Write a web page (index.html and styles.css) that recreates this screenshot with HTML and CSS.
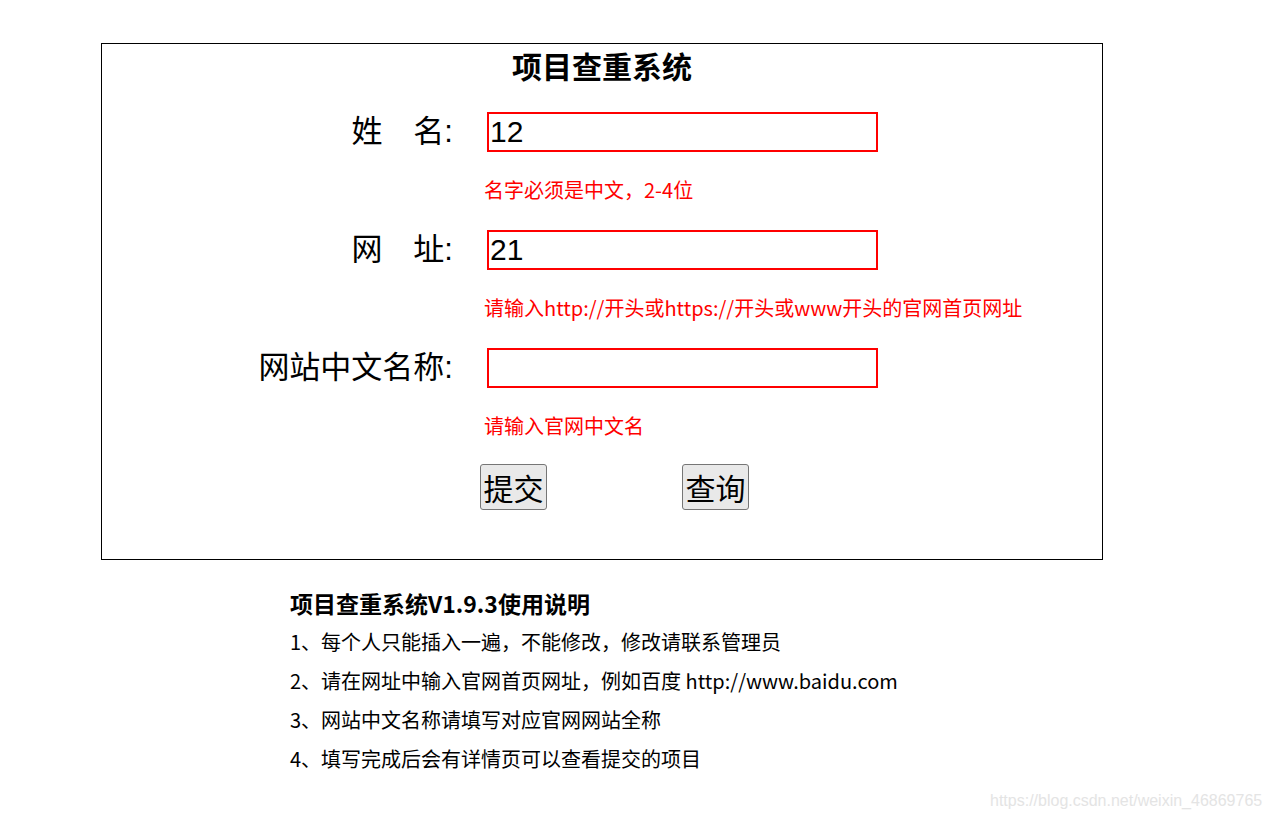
FILE: index.html
```html
<!DOCTYPE html>
<html lang="zh-CN">
<head>
    <meta charset="UTF-8">
    <meta name="viewport" content="width=device-width, initial-scale=1.0">
    <title>项目查重系统</title>
    <link rel="stylesheet" href="styles.css">
</head>
<body>
    <div id="main-box">
        <h1 class="title">项目查重系统</h1>
        <form class="check-form">
            <label class="field-label" for="name">姓　名:</label>
            <input class="field-input" id="name" type="text" value="12">
            <div class="field-hint">名字必须是中文，2-4位</div>

            <label class="field-label" for="url">网　址:</label>
            <input class="field-input" id="url" type="text" value="21">
            <div class="field-hint">请输入http://开头或https://开头或www开头的官网首页网址</div>

            <label class="field-label" for="cname">网站中文名称:</label>
            <input class="field-input" id="cname" type="text" value="">
            <div class="field-hint last">请输入官网中文名</div>

            <div class="buttons">
                <button type="button" class="btn">提交</button>
                <button type="button" class="btn">查询</button>
            </div>
        </form>
    </div>

    <div id="guide">
        <h2 class="guide-title">项目查重系统V1.9.3使用说明</h2>
        <p>1、每个人只能插入一遍，不能修改，修改请联系管理员</p>
        <p>2、请在网址中输入官网首页网址，例如百度 http://www.baidu.com</p>
        <p>3、网站中文名称请填写对应官网网站全称</p>
        <p>4、填写完成后会有详情页可以查看提交的项目</p>
    </div>

    <div class="watermark">https://blog.csdn.net/weixin_46869765</div>
</body>
</html>
```

FILE: styles.css
```css
body {
    margin: 0;
    font-family: 'Liberation Sans', 'Noto Sans CJK SC', sans-serif;
    color: #000;
    background-color: #fff;
}
#main-box {
    width: 1000px;
    margin: 43px 0 0 101px;
    border: 1px solid #000;
    padding-bottom: 49px;
}
.title {
    margin: 0 0 26px;
    text-align: center;
    font-size: 30px;
    line-height: 42px;
    font-weight: bold;
    font-family: 'Noto Sans CJK SC', sans-serif;
}
.check-form {
    display: grid;
    grid-template-columns: 351px 391px;
    column-gap: 34px;
}
.field-label {
    text-align: right;
    font-size: 31px;
    line-height: 40px;
    height: 40px;
}
.field-input {
    box-sizing: border-box;
    width: 391px;
    height: 40px;
    margin: 0;
    border: 2px solid #f00;
    padding: 0 1px;
    font-family: 'Liberation Sans', sans-serif;
    font-size: 30px;
    color: #000;
    outline: none;
}
.field-hint {
    grid-column: 2;
    margin: 28px 0 30px -3px;
    font-size: 20px;
    line-height: 20px;
    color: #f00;
    white-space: nowrap;
    font-family: 'Noto Sans CJK SC', sans-serif;
}
.field-hint.last {
    margin-bottom: 28px;
}
.buttons {
    grid-column: 2;
    margin-left: -7px;
    display: flex;
    gap: 135px;
}
.btn {
    box-sizing: border-box;
    height: 46px;
    width: 67px;
    padding: 0;
    border: 1px solid #767676;
    border-radius: 3px;
    background-color: #e9e9e9;
    font-family: 'Noto Sans CJK SC', sans-serif;
    font-size: 30px;
    line-height: 44px;
    color: #000;
}
#guide {
    margin: 27px 0 0 290px;
}
.guide-title {
    margin: 0 0 3px;
    font-size: 23px;
    line-height: 32px;
    font-weight: bold;
    font-family: 'Noto Sans CJK SC', sans-serif;
}
#guide p {
    margin: 0;
    font-size: 20px;
    line-height: 39px;
    font-family: 'Noto Sans CJK SC', sans-serif;
}
.watermark {
    position: absolute;
    left: 990px;
    top: 792px;
    font-size: 16px;
    color: #e4e4e4;
    font-family: 'Liberation Sans', sans-serif;
}
```
